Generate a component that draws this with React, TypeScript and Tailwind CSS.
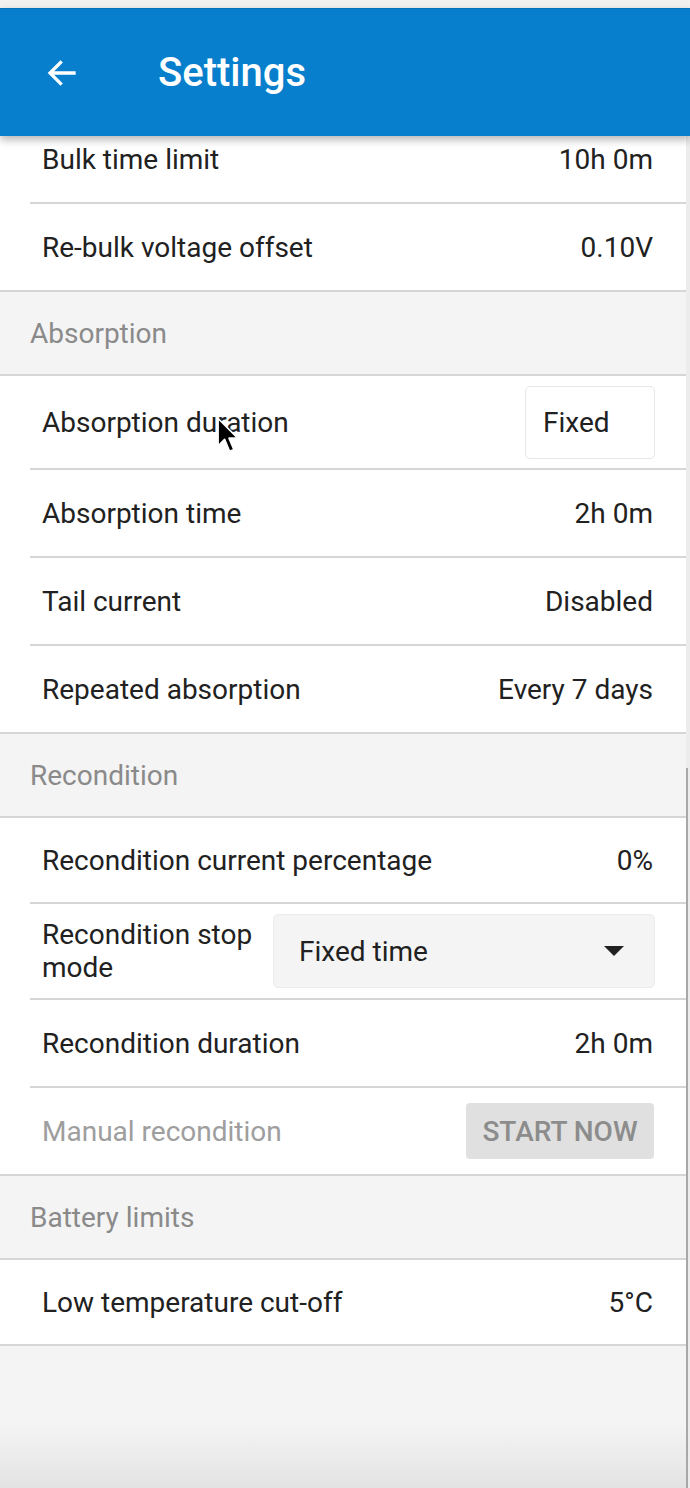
import type { ReactNode } from "react";

type RowProps = {
  label: ReactNode;
  children?: ReactNode;
  height: string;
  last?: boolean;
  muted?: boolean;
};

function Row({ label, children, height, last, muted }: RowProps) {
  return (
    <div
      className={`ml-[30px] flex items-center justify-between pl-[12px] pr-[33px] ${height} ${
        last ? "" : "border-b-2 border-[#d6d6d6]"
      }`}
    >
      <span className={muted ? "text-[#9e9e9e]" : "text-[#212121]"}>{label}</span>
      {children}
    </div>
  );
}

function SectionHeader({ title }: { title: string }) {
  return (
    <div className="flex h-[84px] items-center border-b-2 border-[#d6d6d6] bg-[#f4f4f4] pl-[30px] text-[#8a8a8a]">
      {title}
    </div>
  );
}

function Section({ children }: { children: ReactNode }) {
  return <div className="border-b-2 border-[#d6d6d6] bg-white">{children}</div>;
}

function Value({ children }: { children: ReactNode }) {
  return <span className="text-[#212121]">{children}</span>;
}

function Cursor() {
  return (
    <svg
      className="absolute left-[217px] top-[417px]"
      width="24"
      height="38"
      viewBox="0 0 22 34"
    >
      <path
        d="M1 1 L1 26 L7 20 L11.5 31 L15.5 29.5 L11 19 L19 19 Z"
        fill="#000"
        stroke="#fff"
        strokeWidth="1.5"
        strokeLinejoin="round"
      />
    </svg>
  );
}

export default function App() {
  return (
    <div className="relative flex h-[1488px] w-[690px] overflow-hidden bg-[#f4f4f4] font-['Roboto',sans-serif] text-[28px] leading-[33px]">
      <div className="flex w-[686px] flex-col pt-[116px]">
        <Section>
          <Row label="Bulk time limit" height="h-[88px]">
            <Value>10h 0m</Value>
          </Row>
          <Row label="Re-bulk voltage offset" height="h-[86px]" last>
            <Value>0.10V</Value>
          </Row>
        </Section>

        <SectionHeader title="Absorption" />
        <Section>
          <Row label="Absorption duration" height="h-[94px]">
            <div className="-mr-[2px] flex h-[73px] w-[130px] items-center rounded-[5px] border border-[#e6e6e6] bg-white pl-[17px] text-[#212121]">
              Fixed
            </div>
          </Row>
          <Row label="Absorption time" height="h-[88px]">
            <Value>2h 0m</Value>
          </Row>
          <Row label="Tail current" height="h-[88px]">
            <Value>Disabled</Value>
          </Row>
          <Row label="Repeated absorption" height="h-[86px]" last>
            <Value>Every 7 days</Value>
          </Row>
        </Section>

        <SectionHeader title="Recondition" />
        <Section>
          <Row label="Recondition current percentage" height="h-[86px]">
            <Value>0%</Value>
          </Row>
          <div className="ml-[30px] flex h-[96px] items-center border-b-2 border-[#d6d6d6] pl-[12px] pr-[31px]">
            <span className="w-[231px] leading-[33px] text-[#212121]">
              Recondition stop mode
            </span>
            <div className="flex h-[74px] flex-1 items-center justify-between rounded-[5px] border border-[#ececec] bg-[#f4f4f4] pl-[25px] pr-[30px] text-[#212121]">
              <span>Fixed time</span>
              <svg width="20" height="10" viewBox="0 0 20 10">
                <path d="M0 0 L20 0 L10 10 Z" fill="#212121" />
              </svg>
            </div>
          </div>
          <Row label="Recondition duration" height="h-[88px]">
            <Value>2h 0m</Value>
          </Row>
          <Row label="Manual recondition" height="h-[86px]" muted last>
            <div className="-mr-[1px] flex h-[56px] w-[188px] items-center justify-center rounded-[4px] bg-[#e0e0e0] font-medium text-[#8c8c8c]">
              START NOW
            </div>
          </Row>
        </Section>

        <SectionHeader title="Battery limits" />
        <Section>
          <Row label="Low temperature cut-off" height="h-[84px]" last>
            <Value>5°C</Value>
          </Row>
        </Section>

        <div className="flex-1 bg-[linear-gradient(to_bottom,#f4f4f4_55%,#e3e3e3)]" />
      </div>

      <div className="flex w-[4px] flex-col bg-[#ececec]">
        <div className="h-[768px]" />
        <div className="flex-1 border-l-2 border-[#a8a8a8]" />
      </div>

      <div className="absolute left-0 top-0 w-full">
        <div className="h-[8px] bg-[#f3f1f0]" />
        <div className="flex h-[128px] items-center border-t border-[#0670b8] bg-[#087fcc] text-white shadow-[0_4px_8px_rgba(0,0,0,0.28)]">
          <svg
            className="ml-[44px]"
            width="36"
            height="36"
            viewBox="0 0 24 24"
            fill="none"
            stroke="#fff"
            strokeWidth="2.2"
            strokeLinecap="square"
          >
            <path d="M20 12H5M11 5l-7 7 7 7" />
          </svg>
          <span className="ml-[78px] text-[40px] font-medium leading-none">Settings</span>
        </div>
      </div>

      <Cursor />
    </div>
  );
}
